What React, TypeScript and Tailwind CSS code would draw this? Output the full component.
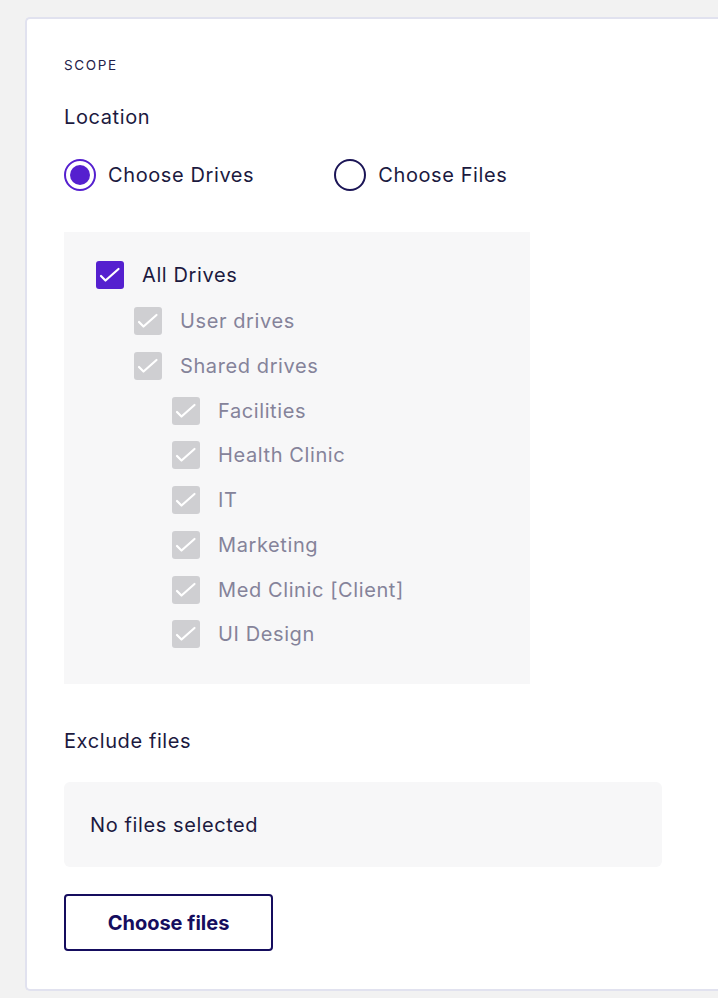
import React, { useState } from 'react';

type Node = { label: string; depth: number };

const drives: Node[] = [
  { label: 'User drives', depth: 1 },
  { label: 'Shared drives', depth: 1 },
  { label: 'Facilities', depth: 2 },
  { label: 'Health Clinic', depth: 2 },
  { label: 'IT', depth: 2 },
  { label: 'Marketing', depth: 2 },
  { label: 'Med Clinic [Client]', depth: 2 },
  { label: 'UI Design', depth: 2 },
];

function Check({ disabled }: { disabled?: boolean }) {
  return (
    <span
      className={`flex h-[28px] w-[28px] shrink-0 items-center justify-center rounded-[3px] ${
        disabled ? 'bg-[#cfcfd2]' : 'bg-[#5520cf]'
      }`}
    >
      <svg viewBox="0 0 28 28" className="h-[28px] w-[28px]" fill="none" stroke="white" strokeWidth="2.2" strokeLinecap="round" strokeLinejoin="round">
        <path d="M5 15l4.5 4.5L22.5 8" />
      </svg>
    </span>
  );
}

function Radio({ checked, label, onClick }: { checked: boolean; label: string; onClick: () => void }) {
  return (
    <button type="button" onClick={onClick} className="flex items-center gap-3 text-left">
      <span
        className={`flex h-[32px] w-[32px] items-center justify-center rounded-full border-2 ${
          checked ? 'border-[#5520cf]' : 'border-[#1b1556]'
        }`}
      >
        {checked && <span className="h-[20px] w-[20px] rounded-full bg-[#5520cf]" />}
      </span>
      <span className="text-[20px] leading-[24px] tracking-[0.03em] text-[#1c1a3f]">{label}</span>
    </button>
  );
}

export default function App() {
  const [mode, setMode] = useState<'drives' | 'files'>('drives');

  return (
    <div className="min-h-[998px] bg-[#f2f2f2] pl-[25px] pt-[17px] font-['Inter',sans-serif] text-[#1c1a3f]">
      <section className="h-[974px] rounded-l-[5px] border-y-2 border-l-2 border-[#e1e2ef] bg-white pl-[37px] pt-[38px]">
        <p className="text-[13.5px] leading-[16px] uppercase tracking-[0.12em] text-[#24214a]">Scope</p>
        <h2 className="mt-[32px] text-[20px] leading-[24px] tracking-[0.03em]">Location</h2>

        <div className="mt-[30px] flex gap-[80px]">
          <Radio checked={mode === 'drives'} label="Choose Drives" onClick={() => setMode('drives')} />
          <Radio checked={mode === 'files'} label="Choose Files" onClick={() => setMode('files')} />
        </div>

        <div className="mt-[41px] h-[452px] w-[466px] bg-[#f7f7f8] pl-[32px] pt-[29px]">
          <div className="flex h-[28px] items-center gap-[18px]">
            <Check />
            <span className="text-[20px] leading-[24px] tracking-[0.03em]">All Drives</span>
          </div>
          <ul className="mt-[18px] space-y-[16.75px]">
            {drives.map((d) => (
              <li
                key={d.label}
                className={`flex h-[28px] items-center gap-[18px] ${d.depth === 1 ? 'pl-[38px]' : 'pl-[76px]'}`}
              >
                <Check disabled />
                <span className="text-[20px] leading-[24px] tracking-[0.03em] text-[#85839a]">{d.label}</span>
              </li>
            ))}
          </ul>
        </div>

        <h3 className="mt-[45px] text-[20px] leading-[24px] tracking-[0.03em]">Exclude files</h3>
        <div className="mt-[29px] flex h-[85px] w-[598px] items-center rounded-[6px] bg-[#f7f7f8] pl-[26px]">
          <span className="text-[20px] leading-[24px] tracking-[0.03em]">No files selected</span>
        </div>

        <button
          type="button"
          className="mt-[27px] h-[57px] w-[209px] rounded-[4px] border-2 border-[#150d5e] text-[20px] font-bold text-[#150d5e]"
        >
          Choose files
        </button>
      </section>
    </div>
  );
}
